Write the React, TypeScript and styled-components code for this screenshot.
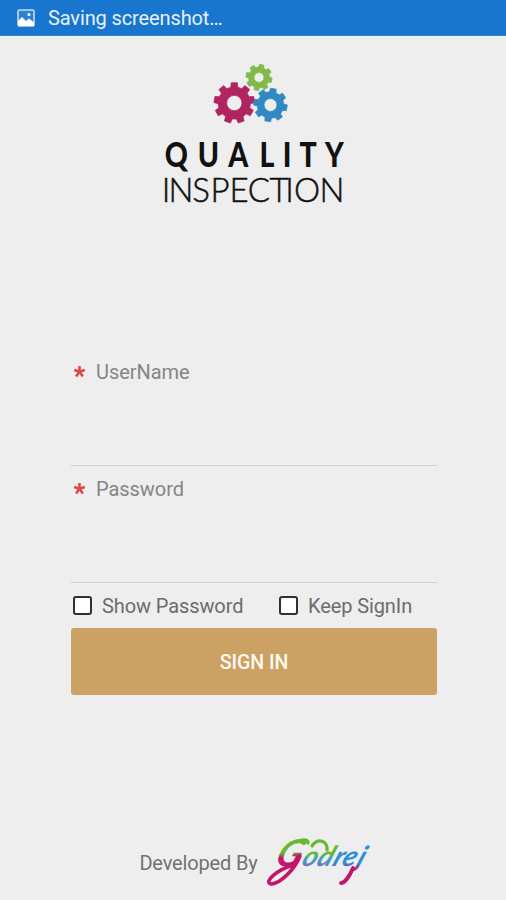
import React from 'react';
import styled, { createGlobalStyle } from 'styled-components';

const GlobalStyle = createGlobalStyle`
  *, *::before, *::after { box-sizing: border-box; }
  body { margin: 0; background: #eeeeee; font-family: Roboto, "Noto Sans", sans-serif; }
`;

const Screen = styled.div`
  display: flex;
  flex-direction: column;
  align-items: center;
  width: 506px;
  height: 900px;
  overflow: hidden;
  background: #eeeeee;
`;

const StatusBar = styled.header`
  display: flex;
  align-items: center;
  gap: 13px;
  width: 100%;
  height: 36px;
  padding: 1px 0 0 17px;
  background: #1976cf;
  border-bottom: 1px solid #3182d0;
  color: #e6f1fb;
  font-size: 20px;
  letter-spacing: -0.12px;
`;

const Brand = styled.div`
  display: flex;
  flex-direction: column;
  width: 182px;
  height: 180px;
  margin-top: 27px;
  margin-left: 4px;
`;

const GearArt = styled.svg`
  display: block;
  width: 76px;
  height: 62px;
  margin-left: 49px;
`;

const Wordmark = styled.svg<{ $light?: boolean }>`
  display: block;
  width: 182px;
  height: 35px;
  margin-top: ${({ $light }) => ($light ? '0' : '13px')};
  overflow: visible;
  fill: #111;
  stroke: #111;
  stroke-width: ${({ $light }) => ($light ? '0.5px' : '0')};
  font-family: Lato, sans-serif;
  font-size: ${({ $light }) => ($light ? '33px' : '34px')};
  font-weight: ${({ $light }) => ($light ? 300 : 900)};
  text-anchor: middle;
`;

const Form = styled.form`
  display: flex;
  flex-direction: column;
  width: 366px;
  margin-top: 106px;
`;

const Field = styled.label`
  display: flex;
  align-items: flex-start;
  height: 117px;
  padding: 11px 0 0 2px;
  border-bottom: 1.5px solid #d0d0d0;
  color: #858585;
  font-size: 20px;
  line-height: 24px;
  letter-spacing: -0.05px;
`;

const Required = styled.svg`
  width: 13px;
  height: 13px;
  margin: 5px 10px 0 0;
`;

const Options = styled.div`
  display: grid;
  grid-template-columns: 206px 1fr;
  height: 45px;
  align-items: center;
  padding-left: 2px;
`;

const Option = styled.label`
  display: flex;
  align-items: center;
  gap: 10px;
  color: #6c6c6c;
  font-size: 20px;
  letter-spacing: -0.1px;
  white-space: nowrap;
`;

const Box = styled.span`
  width: 19px;
  height: 19px;
  border: 2px solid #303030;
  border-radius: 3px;
  background: #fff;
`;

const SignIn = styled.button`
  height: 67px;
  padding-top: 3px;
  border: 0;
  border-radius: 3px;
  background: #cca164;
  color: #fffaf2;
  font-family: Roboto, sans-serif;
  font-size: 19.5px;
  font-weight: 500;
`;

const Column = styled.div`
  width: 366px;
  margin-left: 2px;
`;

const Footer = styled.footer`
  display: flex;
  align-items: center;
  gap: 7px;
  margin-top: 142px;
  margin-left: 4px;
  height: 52px;
  color: #727272;
  font-size: 20px;
  letter-spacing: -0.15px;
`;

const Signature = styled.svg`
  width: 106px;
  height: 52px;
  overflow: visible;
  font-family: Lato, sans-serif;
  font-style: italic;
  font-weight: 700;
  letter-spacing: 0;
`;

type GearProps = { cx: number; cy: number; r: number; hole: number; teeth: number; turn: number; color: string };

function Gear({ cx, cy, r, hole, teeth, turn, color }: GearProps) {
  const root = r * 0.79;
  const step = (Math.PI * 2) / teeth;
  const points: string[] = [];
  for (let i = 0; i < teeth; i += 1) {
    const a = i * step + (turn * Math.PI) / 180;
    [[-0.31, root], [-0.22, r], [0.22, r], [0.31, root]].forEach(([f, d]) => {
      points.push(`${(cx + Math.cos(a + f * step) * d).toFixed(2)} ${(cy + Math.sin(a + f * step) * d).toFixed(2)}`);
    });
  }
  const ring = `M${cx - hole} ${cy}a${hole} ${hole} 0 1 0 ${hole * 2} 0a${hole} ${hole} 0 1 0 ${-hole * 2} 0Z`;
  return <path d={`M${points.join('L')}Z${ring}`} fill={color} fillRule="evenodd" stroke={color} strokeWidth="0.8" strokeLinejoin="round" />;
}

function PictureIcon() {
  return (
    <svg width="18" height="18" viewBox="0 0 18 18">
      <rect x="1" y="1" width="16" height="16" rx="1.5" fill="#2e82d2" stroke="#c2dbf2" strokeWidth="1.6" />
      <path d="M1 12l4-4 4 4 3-2.5 5 4v3.5H1Z" fill="#fff" />
      <circle cx="12" cy="5.5" r="1.5" fill="#fff" />
    </svg>
  );
}

function Star() {
  return (
    <Required viewBox="0 0 13 13">
      <path d="M6.5 6.8V1M6.5 6.8L1.2 5M6.5 6.8L11.8 5M6.5 6.8L3.1 11.5M6.5 6.8L9.9 11.5" stroke="#e04343" strokeWidth="2.5" fill="none" />
    </Required>
  );
}

export default function App() {
  return (
    <>
      <GlobalStyle />
      <Screen>
        <StatusBar><PictureIcon /><span>Saving screenshot…</span></StatusBar>
        <Brand>
          <GearArt viewBox="0 0 76 62">
            <Gear cx={46} cy={14.5} r={13.2} hole={5} teeth={8} turn={12} color="#82b94b" />
            <Gear cx={21.3} cy={40} r={20.4} hole={7.7} teeth={9} turn={30} color="#b0245f" />
            <Gear cx={57.5} cy={42} r={16.8} hole={6.5} teeth={8} turn={10} color="#3089c3" />
          </GearArt>
          <Wordmark viewBox="0 0 182 35">
            <g transform="scale(0.84 1)">
              <text x="14.8 53 88.5 122.5 146.5 171.5 203" y="29">QUALITY</text>
            </g>
          </Wordmark>
          <Wordmark $light viewBox="0 0 182 35">
            <text x="2 17 37 56 75 95 115 125.5 143 168" y="28.5">INSPECTION</text>
          </Wordmark>
        </Brand>
        <Column>
          <Form>
            <Field><Star />UserName</Field>
            <Field><Star />Password</Field>
            <Options>
              <Option><Box />Show Password</Option>
              <Option><Box />Keep SignIn</Option>
            </Options>
            <SignIn type="button">SIGN IN</SignIn>
          </Form>
        </Column>
        <Footer>
          <span>Developed By</span>
          <Signature viewBox="0 0 106 52">
            <defs>
              <linearGradient id="initial" gradientUnits="userSpaceOnUse" x1="20" y1="2" x2="24" y2="46">
                <stop offset="0.3" stopColor="#69b82f" />
                <stop offset="0.42" stopColor="#c4146c" />
              </linearGradient>
              <linearGradient id="middle" gradientUnits="userSpaceOnUse" x1="56" y1="2" x2="56" y2="34">
                <stop offset="0.45" stopColor="#69b82f" />
                <stop offset="0.62" stopColor="#39a3d2" />
                <stop offset="0.88" stopColor="#7a6fb8" />
              </linearGradient>
              <linearGradient id="ending" gradientUnits="userSpaceOnUse" x1="88" y1="2" x2="88" y2="46">
                <stop offset="0.56" stopColor="#2e8dd6" />
                <stop offset="0.7" stopColor="#c4146c" />
              </linearGradient>
            </defs>
            <g transform="translate(9 0) skewX(-22)">
              <text y="29" fontSize="28">
                <tspan x="11" fontSize="37" fill="url(#initial)">G</tspan>
                <tspan x="38 53" fill="url(#middle)">od</tspan>
                <tspan x="69 78 93" fill="url(#ending)">rej</tspan>
              </text>
            </g>
            <path d="M35 19C30 32 15 47 6 47C-2 45 12 33 28 28" fill="none" stroke="#c4146c" strokeWidth="3.5" strokeLinecap="round" />
            <path d="M32 5C37 2 44 2 43 6M47 9C53 0 63 4 62 13" fill="none" stroke="#69b82f" strokeWidth="3.2" strokeLinecap="round" />
            <path d="M88 31C85 38 80 46 76 46" fill="none" stroke="#c4146c" strokeWidth="3.8" strokeLinecap="round" />
          </Signature>
        </Footer>
      </Screen>
    </>
  );
}
